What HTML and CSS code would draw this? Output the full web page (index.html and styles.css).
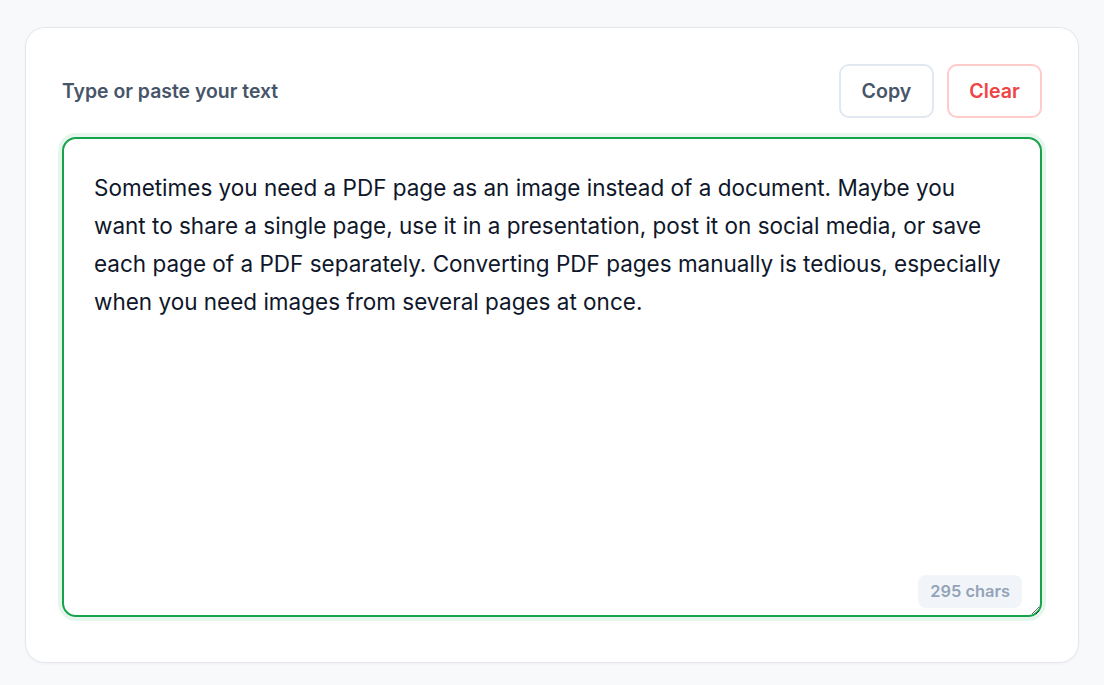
FILE: index.html
```html
<!DOCTYPE html>
<html lang="en">
<head>
<meta charset="utf-8">
<title>Text editor</title>
<link rel="stylesheet" href="styles.css">
</head>
<body>
<main class="page">
  <section class="card">
    <div class="card-head">
      <label class="label" for="input">Type or paste your text</label>
      <div class="actions">
        <button class="btn btn-copy" type="button">Copy</button>
        <button class="btn btn-clear" type="button">Clear</button>
      </div>
    </div>
    <div class="editor">
      <textarea id="input" class="input" spellcheck="false">Sometimes you need a PDF page as an image instead of a document. Maybe you want to share a single page, use it in a presentation, post it on social media, or save each page of a PDF separately. Converting PDF pages manually is tedious, especially when you need images from several pages at once.</textarea>
      <span class="count">295 chars</span>
    </div>
  </section>
</main>
</body>
</html>
```
FILE: styles.css
```css
* { box-sizing: border-box; }
html, body { margin: 0; padding: 0; }
body {
  background: #f8f9fb;
  font-family: Inter, "Noto Sans", sans-serif;
  color: #0f172a;
}
.page {
  padding: 27px 25px 22px;
}
.card {
  background: #ffffff;
  border: 1px solid #e5e7eb;
  border-radius: 20px;
  padding: 36px 36px 45px;
  box-shadow: 0 1px 3px rgba(15, 23, 42, 0.04);
}
.card-head {
  display: flex;
  align-items: center;
  justify-content: space-between;
  margin-bottom: 19px;
}
.label {
  font-size: 19.4px;
  font-weight: 600;
  color: #475569;
}
.actions {
  display: flex;
  gap: 13px;
}
.btn {
  font-family: Inter, "Noto Sans", sans-serif;
  font-size: 19.6px;
  font-weight: 600;
  width: 95px;
  height: 54px;
  border-radius: 10px;
  background: #ffffff;
  cursor: pointer;
  padding: 0;
}
.btn-copy {
  border: 2px solid #e2e8f0;
  color: #475569;
}
.btn-clear {
  border: 2px solid #fecaca;
  color: #ef4444;
}
.editor {
  position: relative;
}
.input {
  display: block;
  width: 100%;
  height: 480px;
  border: 2px solid #16a34a;
  border-radius: 14px;
  box-shadow: 0 0 0 4px rgba(22, 163, 74, 0.1);
  padding: 30px 32px 30px 30px;
  font-family: Inter, "Noto Sans", sans-serif;
  font-size: 22.5px;
  line-height: 38px;
  color: #0f172a;
  outline: none;
  resize: both;
  background: #ffffff;
}
.count {
  position: absolute;
  right: 20px;
  bottom: 9px;
  background: #f1f5f9;
  color: #94a3b8;
  font-size: 16.4px;
  font-weight: 600;
  padding: 0 12px;
  height: 33px;
  line-height: 33px;
  border-radius: 8px;
}
```
